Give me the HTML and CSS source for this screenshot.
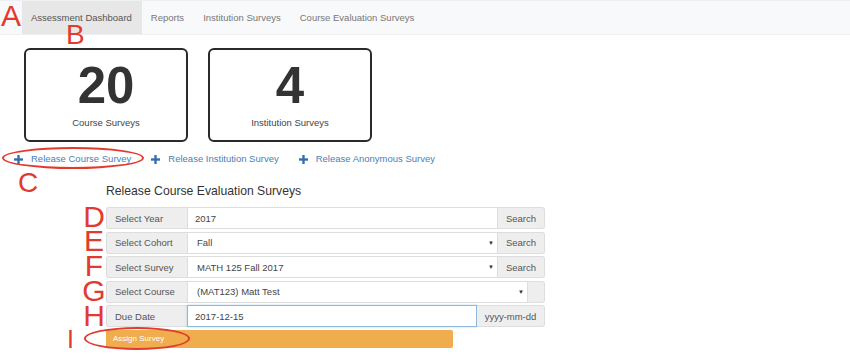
FILE: index.html
```html
<!DOCTYPE html>
<html lang="en">

<head>
    <meta charset="UTF-8">
    <meta name="viewport" content="width=device-width, initial-scale=1.0">
    <title>Assessment Dashboard</title>
    <link rel="stylesheet" href="styles.css">
</head>

<body>
    <div class="page">
        <nav class="navbar">
            <ul class="nav">
                <li class="active"><a href="#">Assessment Dashboard</a></li>
                <li><a href="#">Reports</a></li>
                <li><a href="#">Institution Surveys</a></li>
                <li><a href="#">Course Evaluation Surveys</a></li>
            </ul>
        </nav>

        <div class="stats">
            <div class="stat-card">
                <div class="stat-num">20</div>
                <div class="stat-label">Course Surveys</div>
            </div>
            <div class="stat-card">
                <div class="stat-num">4</div>
                <div class="stat-label">Institution Surveys</div>
            </div>
        </div>

        <div class="release-links">
            <a href="#"><svg class="plus" viewBox="0 0 10 10"><rect x="3.7" y="0" width="2.6" height="10"/><rect x="0" y="3.7" width="10" height="2.6"/></svg>Release Course Survey</a>
            <a href="#"><svg class="plus" viewBox="0 0 10 10"><rect x="3.7" y="0" width="2.6" height="10"/><rect x="0" y="3.7" width="10" height="2.6"/></svg>Release Institution Survey</a>
            <a href="#"><svg class="plus" viewBox="0 0 10 10"><rect x="3.7" y="0" width="2.6" height="10"/><rect x="0" y="3.7" width="10" height="2.6"/></svg>Release Anonymous Survey</a>
        </div>

        <section class="release-form">
            <h3>Release Course Evaluation Surveys</h3>
            <div class="input-group">
                <span class="addon">Select Year</span>
                <div class="field">2017</div>
                <span class="addon btn">Search</span>
            </div>
            <div class="input-group">
                <span class="addon">Select Cohort</span>
                <div class="field select">Fall<span class="caret">▼</span></div>
                <span class="addon btn">Search</span>
            </div>
            <div class="input-group">
                <span class="addon">Select Survey</span>
                <div class="field select">MATH 125 Fall 2017<span class="caret">▼</span></div>
                <span class="addon btn">Search</span>
            </div>
            <div class="input-group">
                <span class="addon">Select Course</span>
                <div class="field select">(MAT123) Matt Test<span class="caret">▼</span></div>
                <span class="addon empty"></span>
            </div>
            <div class="input-group">
                <span class="addon">Due Date</span>
                <div class="field focus">2017-12-15</div>
                <span class="addon fmt">yyyy-mm-dd</span>
            </div>
            <button type="button" class="assign-btn">Assign Survey</button>
        </section>

        <!-- red markup drawn over the screenshot -->
        <div class="mark mark-a">A</div>
        <div class="mark mark-b">B</div>
        <div class="mark mark-c">C</div>
        <div class="mark mark-rows">D<br>E<br>F<br>G<br>H</div>
        <div class="mark mark-i">I</div>
        <div class="ring ring-c"></div>
        <div class="ring ring-i"></div>
    </div>
</body>

</html>
```

FILE: styles.css
```css
body {
    margin: 0;
    font-family: 'Liberation Sans', Arial, sans-serif;
    background: #fff;
    color: #333;
}

.page {
    position: relative;
    width: 850px;
    height: 360px;
    overflow: hidden;
}

.navbar {
    height: 33px;
    background: #f8f9fa;
    border-top: 1px solid #eef0f2;
    border-bottom: 1px solid #eef0f2;
}

.nav {
    list-style: none;
    margin: 0;
    padding: 0 0 0 22px;
    display: flex;
    height: 100%;
}

.nav li a {
    display: block;
    height: 33px;
    line-height: 33px;
    padding: 0 10px 0 9px;
    font-size: 9.5px;
    color: #777;
    text-decoration: none;
}

.nav li.active a {
    background: #e7e7e7;
    color: #555;
}

.stats {
    display: flex;
    gap: 20px;
    padding-left: 24px;
    margin-top: 13px;
}

.stat-card {
    width: 164px;
    height: 94px;
    box-sizing: border-box;
    border: 2px solid #2a2a2a;
    border-radius: 6px;
    text-align: center;
    padding-top: 10px;
}

.stat-num {
    font-size: 51px;
    font-weight: 700;
    line-height: 1;
    color: #333;
}

.stat-label {
    font-size: 9.5px;
    line-height: 13px;
    margin-top: 5px;
    color: #444;
}

.release-links {
    display: flex;
    padding-left: 14px;
    margin-top: 10px;
    height: 14px;
}

.release-links a {
    display: flex;
    align-items: center;
    font-size: 9.5px;
    line-height: 14px;
    color: #4a7fb5;
    text-decoration: none;
    margin-right: 20px;
}

.plus {
    width: 9px;
    height: 9px;
    fill: #2f6fae;
    margin-right: 8px;
}

.release-form {
    margin-left: 106px;
    width: 439px;
}

.release-form h3 {
    font-size: 12.2px;
    font-weight: 400;
    line-height: 16px;
    margin: 17px 0 8px;
    color: #333;
}

.input-group {
    display: flex;
    height: 22px;
    margin-bottom: 2.5px;
    font-size: 9.5px;
}

.addon {
    display: flex;
    align-items: center;
    box-sizing: border-box;
    background: #eee;
    border: 1px solid #ddd;
    color: #555;
}

.input-group > .addon:first-child {
    width: 81px;
    padding-left: 8px;
    border-radius: 3px 0 0 3px;
    border-right: none;
}

.addon.btn {
    width: 47px;
    justify-content: center;
    border-radius: 0 3px 3px 0;
    border-left: none;
}

.addon.empty {
    width: 17px;
    border-radius: 0 3px 3px 0;
    border-left: none;
}

.addon.fmt {
    width: 68px;
    justify-content: center;
    border-radius: 0 3px 3px 0;
    border-left: none;
}

.field {
    flex: 1;
    display: flex;
    align-items: center;
    box-sizing: border-box;
    border: 1px solid #ddd;
    padding-left: 7px;
    color: #444;
    background: #fff;
}

.field.select {
    padding-left: 9px;
    padding-right: 3px;
}

.caret {
    margin-left: auto;
    font-size: 6px;
    color: #333;
}

.field.focus {
    border-color: #8fb8dc;
    box-shadow: 0 0 2px rgba(102, 175, 233, 0.5);
}

.assign-btn {
    display: block;
    width: 347px;
    height: 18px;
    margin-top: 0;
    padding: 0 0 0 7px;
    text-align: left;
    background: #f0ad4e;
    border: none;
    border-radius: 2px;
    color: #fff;
    font-family: inherit;
    font-size: 8px;
}

/* annotations */
.mark {
    position: absolute;
    color: #e23a2e;
    font-size: 30px;
    line-height: 22px;
    font-family: 'Liberation Sans', Arial, sans-serif;
}

.mark-a { left: 1px; top: 5px; }
.mark-b { left: 66px; top: 25px; font-size: 28px; line-height: 20px; }
.mark-c { left: 18px; top: 173px; font-size: 28px; line-height: 20px; }
.mark-rows {
    left: 82px;
    width: 24px;
    top: 204.7px;
    line-height: 24.75px;
    text-align: center;
}
.mark-i { left: 67px; top: 330px; font-size: 25px; line-height: 18px; }

.ring {
    position: absolute;
    border: 2px solid #e23a2e;
    border-radius: 50%;
    box-sizing: border-box;
}

.ring-c { left: 2px; top: 147px; width: 142px; height: 22px; }
.ring-i { left: 84px; top: 327px; width: 106px; height: 23px; }
```
